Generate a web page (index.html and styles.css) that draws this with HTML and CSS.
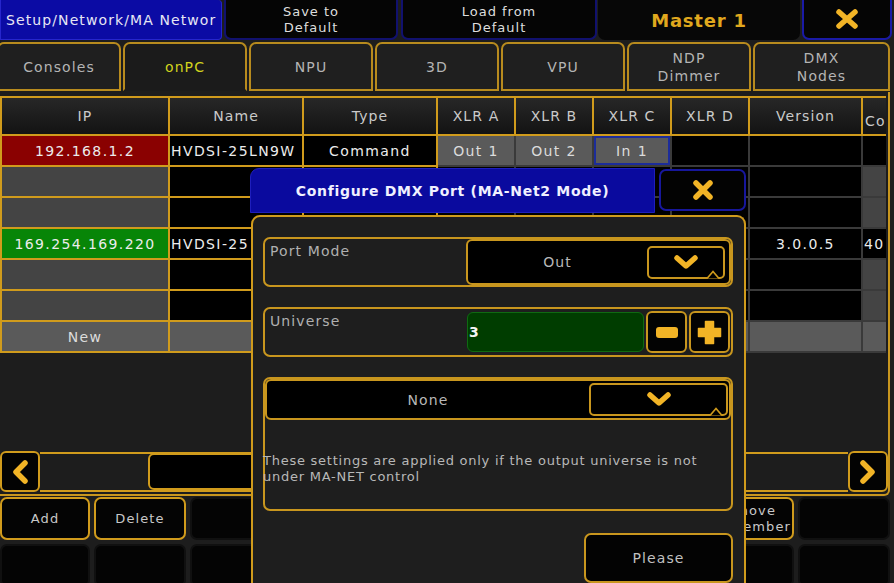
FILE: index.html
```html
<!DOCTYPE html>
<html>
<head>
<meta charset="utf-8">
<title>Setup/Network/MA Network</title>
<link rel="stylesheet" href="styles.css">
</head>
<body>
<div class="app">
  <div class="topbar">
    <div class="title">Setup/Network/MA Networ</div>
    <div class="tbtn save">Save to<br>Default</div>
    <div class="tbtn load">Load from<br>Default</div>
    <div class="master">Master 1</div>
    <div class="tbtn close">
      <svg width="26" height="22" viewBox="0 0 26 22"><path d="M5 4 L21 18 M21 4 L5 18" class="ico-stroke"/></svg>
    </div>
  </div>

  <div class="tabs">
    <div class="tab">Consoles</div>
    <div class="tab active">onPC</div>
    <div class="tab">NPU</div>
    <div class="tab">3D</div>
    <div class="tab">VPU</div>
    <div class="tab">NDP<br>Dimmer</div>
    <div class="tab">DMX<br>Nodes</div>
  </div>

  <div class="panel">
    <div class="tablewrap">
      <table>
        <colgroup>
          <col class="c-ip"><col class="c-name"><col class="c-type"><col class="c-xlr"><col class="c-xlr"><col class="c-xlr"><col class="c-xlr"><col class="c-ver"><col class="c-co">
        </colgroup>
        <thead>
          <tr><th>IP</th><th>Name</th><th>Type</th><th>XLR A</th><th>XLR B</th><th>XLR C</th><th>XLR D</th><th>Version</th><th class="th-co">Co</th></tr>
        </thead>
        <tbody>
          <tr><td class="g red">192.168.1.2</td><td class="g blk left">HVDSI-25LN9W</td><td class="g blk">Command</td><td class="gry">Out 1</td><td class="gry">Out 2</td><td class="gry sel">In 1</td><td class="blk"></td><td class="blk"></td><td class="blk"></td></tr>
          <tr><td class="g dk"></td><td class="g blk"></td><td class="g blk"></td><td class="blk"></td><td class="blk"></td><td class="blk"></td><td class="blk"></td><td class="blk"></td><td class="dk"></td></tr>
          <tr><td class="g dk"></td><td class="g blk"></td><td class="g blk"></td><td class="blk"></td><td class="blk"></td><td class="blk"></td><td class="blk"></td><td class="blk"></td><td class="dk"></td></tr>
          <tr><td class="g grn">169.254.169.220</td><td class="g blk left">HVDSI-25</td><td class="g blk"></td><td class="blk"></td><td class="blk"></td><td class="blk"></td><td class="blk"></td><td class="blk">3.0.0.5</td><td class="blk left">40</td></tr>
          <tr><td class="g dk"></td><td class="g blk"></td><td class="g blk"></td><td class="blk"></td><td class="blk"></td><td class="blk"></td><td class="blk"></td><td class="blk"></td><td class="dk"></td></tr>
          <tr><td class="g dk"></td><td class="g blk"></td><td class="g blk"></td><td class="blk"></td><td class="blk"></td><td class="blk"></td><td class="blk"></td><td class="blk"></td><td class="dk"></td></tr>
          <tr><td class="g gry">New</td><td class="g gry"></td><td class="g gry"></td><td class="gry"></td><td class="gry"></td><td class="gry"></td><td class="gry"></td><td class="gry"></td><td class="gry"></td></tr>
        </tbody>
      </table>
    </div>
    <div class="scroll">
      <div class="arrow">
        <svg width="18" height="26" viewBox="0 0 18 26"><path d="M14 4 L5 13 L14 22" class="ico-stroke"/></svg>
      </div>
      <div class="track"><div class="thumb"></div></div>
      <div class="arrow">
        <svg width="18" height="26" viewBox="0 0 18 26"><path d="M4 4 L13 13 L4 22" class="ico-stroke"/></svg>
      </div>
    </div>
  </div>

  <div class="buttons">
    <div class="btn on">Add</div>
    <div class="btn on">Delete</div>
    <div class="btn"></div>
    <div class="btn"></div>
    <div class="btn"></div>
    <div class="btn"></div>
    <div class="btn"></div>
    <div class="btn on rm"><span class="rmtext"><span class="l1">Remove</span><br>Member</span></div>
    <div class="btn"></div>
    <div class="btn"></div>
    <div class="btn"></div>
    <div class="btn"></div>
    <div class="btn"></div>
    <div class="btn"></div>
    <div class="btn"></div>
    <div class="btn"></div>
    <div class="btn"></div>
    <div class="btn"></div>
  </div>
</div>

<div class="dialog">
  <div class="dhead">
    <div class="dtitle">Configure DMX Port (MA-Net2 Mode)</div>
    <div class="dclose">
      <svg width="24" height="24" viewBox="0 0 24 24"><path d="M5 5 L19 19 M19 5 L5 19" class="ico-stroke"/></svg>
    </div>
  </div>
  <div class="dbody">
    <div class="field">
      <div class="flabel">Port Mode</div>
      <div class="select">
        <div class="sval">Out</div>
        <div class="sbtn">
          <svg width="26" height="15" viewBox="0 0 26 15"><path d="M4 3 L13 11 L22 3" class="ico-stroke"/></svg>
          <svg class="notch" width="12" height="9" viewBox="0 0 12 9"><path d="M0 8.5 L6 1.5 L12 8.5" class="notch-path"/></svg>
        </div>
      </div>
    </div>
    <div class="field">
      <div class="flabel">Universe</div>
      <div class="num">
        <div class="numin">3</div>
        <div class="pm">
          <svg width="22" height="11" viewBox="0 0 22 11"><rect x="0" y="0" width="22" height="11" rx="3" class="ico-fill"/></svg>
        </div>
        <div class="pm">
          <svg width="25" height="25" viewBox="0 0 25 25"><path d="M8.5 1.5 h8 v7 h7 v8 h-7 v7 h-8 v-7 h-7 v-8 h7 z" class="ico-fill ico-round"/></svg>
        </div>
      </div>
    </div>
    <div class="field tall">
      <div class="select wide">
        <div class="sval">None</div>
        <div class="sbtn">
          <svg width="26" height="15" viewBox="0 0 26 15"><path d="M4 3 L13 11 L22 3" class="ico-stroke"/></svg>
          <svg class="notch" width="12" height="9" viewBox="0 0 12 9"><path d="M0 8.5 L6 1.5 L12 8.5" class="notch-path"/></svg>
        </div>
      </div>
      <div class="note">These settings are applied only if the output universe is not<br>under MA-NET control</div>
    </div>
    <div class="actions">
      <div class="please">Please</div>
    </div>
  </div>
</div>
</body>
</html>
```
FILE: styles.css
```css
* { box-sizing: border-box; }
html, body { margin: 0; padding: 0; }
body {
  width: 894px;
  height: 583px;
  overflow: hidden;
  position: relative;
  background: #1d1d1d;
  font-family: "DejaVu Sans", "Noto Sans", sans-serif;
  font-size: 14px;
  letter-spacing: 1.1px;
  color: #c4c4c4;
}

.ico-stroke { fill: none; stroke: #f2b426; stroke-width: 5.5; stroke-linecap: round; stroke-linejoin: round; }
.ico-fill { fill: #f2b426; }
.ico-round { stroke: #f2b426; stroke-width: 1.5; stroke-linejoin: round; }
.notch-path { fill: #000; stroke: #d09b1c; stroke-width: 1.6; stroke-linejoin: miter; }

/* top bar */
.topbar { display: flex; height: 40px; }
.title {
  width: 222px; flex: none;
  background: #0b0ba4;
  border: 1px solid #2626cc;
  border-top: none;
  border-radius: 0 4px 4px 0;
  color: #e6e6f4;
  display: flex; align-items: center;
  padding-left: 5px;
  font-size: 14px; letter-spacing: 1.1px;
  white-space: nowrap; overflow: hidden;
}
.tbtn {
  flex: none;
  background: #050505;
  border: 2px solid #11116e;
  border-top: none;
  border-radius: 0 0 7px 7px;
  display: flex; align-items: center; justify-content: center;
  text-align: center;
  font-size: 13px; line-height: 16px; letter-spacing: 1px;
  color: #dedede;
  padding-top: 2px;
}
.save { width: 174px; margin-left: 2px; }
.load { width: 196px; margin-left: 3px; }
.master {
  flex: none; width: 202px; margin-left: 1px;
  background: #070707;
  border-radius: 0 0 7px 7px;
  color: #e0a81e;
  font-weight: bold; font-size: 18px; letter-spacing: 0.8px;
  display: flex; align-items: center; justify-content: center;
}
.close { width: 90px; margin-left: 2px; border-color: #1a1aa6; padding-top: 0; }

/* tabs */
.tabs { display: flex; gap: 2px; margin: 2px 4px 0 -3px; height: 49px; }
.tab {
  flex: none; width: 124px;
  border: 2px solid #b88b1e;
  border-radius: 7px 7px 0 0;
  background: #1f1f1f;
  display: flex; align-items: center; justify-content: center;
  text-align: center; line-height: 18px;
  color: #b4b4b4;
}
.tab:last-child { flex: 1; width: auto; }
.tab.active { border-bottom-color: transparent; background: #1b1b1b; color: #d2d41e; }

/* panel */
.panel {
  margin-top: 1px;
  width: 890px; height: 404px;
  border-right: 2px solid #c8961e;
  border-bottom: 2px solid #c8961e;
  border-radius: 0 0 6px 0;
  padding-bottom: 2px;
  display: flex; flex-direction: column;
}
.tablewrap { height: 359px; width: 886px; overflow: hidden; padding-top: 4px; }
table { border-collapse: collapse; table-layout: fixed; width: 922px; }
.c-ip { width: 168px; } .c-name { width: 134px; } .c-type { width: 134px; }
.c-xlr { width: 78px; } .c-ver { width: 113px; } .c-co { width: 60px; }
th {
  height: 38px; padding: 0;
  border: 2px solid #d09b1c;
  background: linear-gradient(#272727, #131313);
  font-weight: normal; color: #cacaca;
  white-space: nowrap; overflow: hidden;
}
th.th-co { text-align: left; padding: 10px 0 0 2px; }
td {
  height: 31px; padding: 0;
  border: 2px solid #3a3a3a;
  text-align: center; color: #ececec;
  letter-spacing: 1.4px;
  white-space: nowrap; overflow: hidden;
}
td.g { border-color: #d09b1c; }
td.left { text-align: left; padding-left: 1px; }
.red { background: #8a0101; }
.grn { background: #078507; }
.blk { background: #000; }
.dk { background: #444; }
.gry { background: #5a5a5a; color: #dcdcdc; }
.sel { box-shadow: inset 0 0 0 2px #1c2c9a; }

.scroll { display: flex; height: 41px; }
.arrow {
  flex: none; width: 40px;
  background: #030303;
  border: 2px solid #d09b1c;
  border-radius: 6px;
  display: flex; align-items: center; justify-content: center;
}
.track {
  flex: 1;
  border-top: 2px solid #d09b1c;
  border-bottom: 2px solid #d09b1c;
  margin-top: 1px;
  background: #1d1d1d;
  padding: 0 0 0 108px;
}
.thumb {
  width: 560px;
  background: #000;
  border: 2px solid #d09b1c;
  border-radius: 6px;
  margin-top: -1px;
  height: calc(100% + 1px);
}

/* bottom buttons */
.buttons {
  margin-top: 1px;
  width: 890px;
  display: grid;
  grid-template-columns: 90px 92px repeat(5, 1fr) 92px 92px;
  grid-auto-rows: 43px;
  gap: 4px;
}
.btn {
  background: #040404;
  border: 2px solid #101010;
  border-radius: 7px;
  display: flex; align-items: center; justify-content: center;
  text-align: center; font-size: 13px; line-height: 16px; color: #c8c8c8;
}
.btn.on { border-color: #d09b1c; }
.btn.rm { justify-content: flex-end; padding-right: 1px; overflow: hidden; white-space: nowrap; }
.rmtext { text-align: right; }
.rmtext .l1 { margin-right: 15px; }

/* dialog overlay */
.dialog {
  position: absolute;
  left: 250px; top: 168px;
  width: 496px; height: 430px;
  display: flex; flex-direction: column;
}
.dhead { display: flex; height: 45px; }
.dtitle {
  width: 405px;
  background: #0a0a9e;
  border: 1px solid #1e1ebc;
  border-radius: 9px 0 0 0;
  color: #f0f0ff;
  font-weight: bold; font-size: 14px; letter-spacing: 0.7px;
  display: flex; align-items: center; justify-content: center;
}
.dclose {
  width: 87px; margin: 1px 0 2px 4px;
  background: #030303;
  border: 2px solid #17179c;
  border-radius: 7px;
  display: flex; align-items: center; justify-content: center;
}
.dbody {
  flex: 1;
  margin-top: 2px;
  margin-left: 1px;
  background: #1e1e1e;
  border: 2px solid #d09b1c;
  border-bottom: none;
  border-radius: 9px 9px 0 0;
  padding: 20px 11px 0 10px;
  display: flex; flex-direction: column; gap: 20px;
}
.field {
  height: 50px;
  border: 2px solid #c8961e;
  border-radius: 7px;
  display: flex;
}
.flabel { padding: 4px 0 0 5px; color: #b0b0b0; flex: 1; }
.select {
  width: 265px;
  margin: 0 0 0 auto;
  background: #000;
  border: 2px solid #c8961e;
  border-radius: 6px;
  display: flex; align-items: center;
}
.sval { flex: 1; text-align: center; color: #b8b8b8; }
.sbtn {
  position: relative;
  flex: none; width: 78px; height: 33px; margin-right: 4px;
  border: 2px solid #c8961e;
  border-radius: 5px;
  display: flex; align-items: center; justify-content: center;
}
.notch { position: absolute; right: 4px; bottom: -2px; }
.num { display: flex; align-items: center; gap: 2px; margin-right: 1px; }
.numin {
  width: 177px; height: 40px;
  background: #003d00;
  border: 1px solid #0f6a12;
  border-radius: 6px;
  color: #f4f4f4; font-weight: bold;
  display: flex; align-items: center; padding-left: 1px;
}
.pm {
  width: 41px; height: 42px;
  background: #030303;
  border: 2px solid #c8961e;
  border-radius: 6px;
  display: flex; align-items: center; justify-content: center;
}
.field.tall { height: 134px; flex-direction: column; }
.select.wide { width: auto; margin: 0; height: 41px; }
.select.wide .sbtn { width: 139px; margin-right: 1px; }
.note {
  margin: 33px 0 0 -2px;
  font-size: 13px; letter-spacing: 0.75px; line-height: 16px;
  color: #b8b8b8;
  white-space: nowrap;
}
.actions { display: flex; justify-content: flex-end; margin-top: 2px; }
.please {
  width: 149px; height: 50px;
  background: #030303;
  border: 2px solid #c8961e;
  border-radius: 7px;
  display: flex; align-items: center; justify-content: center;
  color: #c0c0c0;
}
```
